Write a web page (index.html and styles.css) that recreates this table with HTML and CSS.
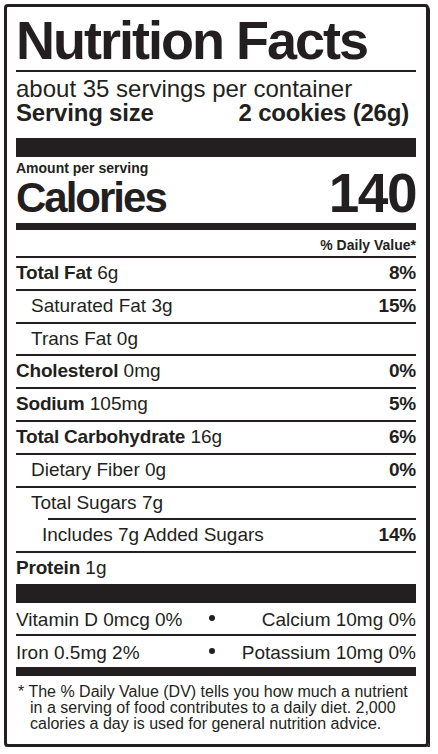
FILE: index.html
```html
<!DOCTYPE html>
<html lang="en">
<head>
    <meta charset="UTF-8">
    <meta name="viewport" content="width=device-width, initial-scale=1.0">
    <title>Nutrition Facts</title>
    <link rel="stylesheet" href="styles.css">
</head>
<body>

<div class="label">
    <h1 class="title">Nutrition Facts</h1>

    <!-- Servings -->
    <div class="serving">
        <div>about 35 servings per container</div>
        <div class="serving-size">
            <span>Serving size</span>
            <span>2 cookies (26g)</span>
        </div>
    </div>

    <!-- Calories -->
    <div class="amount">Amount per serving</div>
    <div class="calories">
        <span class="calories-label">Calories</span>
        <span class="calories-value">140</span>
    </div>

    <div class="dv">% Daily Value*</div>

    <!-- Nutrients -->
    <div class="row"><span><b>Total Fat</b> 6g</span><span class="pct">8%</span></div>
    <div class="row indent"><span>Saturated Fat 3g</span><span class="pct">15%</span></div>
    <div class="row indent"><span>Trans Fat 0g</span></div>
    <div class="row"><span><b>Cholesterol</b> 0mg</span><span class="pct">0%</span></div>
    <div class="row"><span><b>Sodium</b> 105mg</span><span class="pct">5%</span></div>
    <div class="row"><span><b>Total Carbohydrate</b> 16g</span><span class="pct">6%</span></div>
    <div class="row indent"><span>Dietary Fiber 0g</span><span class="pct">0%</span></div>
    <div class="row indent sugars"><span>Total Sugars 7g</span></div>
    <div class="row indent-2"><span>Includes 7g Added Sugars</span><span class="pct">14%</span></div>
    <div class="row protein"><span><b>Protein</b> 1g</span></div>

    <!-- Vitamins and minerals -->
    <div class="row vit">
        <span>Vitamin D 0mcg 0%</span>
        <span class="dot"></span>
        <span class="vit-right">Calcium 10mg 0%</span>
    </div>
    <div class="row vit vit-last">
        <span>Iron 0.5mg 2%</span>
        <span class="dot"></span>
        <span class="vit-right">Potassium 10mg 0%</span>
    </div>

    <p class="note">* The % Daily Value (DV) tells you how much a nutrient in a serving of food contributes to a daily diet. 2,000 calories a day is used for general nutrition advice.</p>
</div>

</body>
</html>
```

FILE: styles.css
```css
* {
    margin: 0;
    padding: 0;
    box-sizing: content-box;
}

body {
    font-family: "Liberation Sans", Arial, sans-serif;
    background-color: #fff;
    color: #231f20;
}

.label {
    width: 400px;
    margin: 4px 0 0 4px;
    padding: 6px 10px 12px 9px;
    border: 3px solid #231f20;
    border-radius: 4px;
    box-shadow: 1px 2px 0 #231f20;
}

.title {
    font-size: 54px;
    line-height: 54px;
    font-weight: bold;
    letter-spacing: -2px;
    white-space: nowrap;
    padding-bottom: 3px;
    border-bottom: 2px solid #231f20;
}

.serving {
    font-size: 24px;
    line-height: 24px;
    padding: 5px 0 13px;
    border-bottom: 19px solid #231f20;
}

.serving-size {
    display: flex;
    justify-content: space-between;
    font-weight: bold;
    letter-spacing: -0.2px;
    padding-right: 7px;
}

.amount {
    font-size: 14px;
    line-height: 14px;
    font-weight: bold;
    padding-top: 4px;
}

.calories {
    display: flex;
    justify-content: space-between;
    align-items: baseline;
    height: 48px;
    font-weight: bold;
    border-bottom: 7px solid #231f20;
}

.calories-label {
    font-size: 42px;
    line-height: 36px;
    letter-spacing: -2px;
}

.calories-value {
    font-size: 55px;
    line-height: 36px;
    letter-spacing: -1.5px;
}

.dv {
    text-align: right;
    font-size: 14px;
    line-height: 14px;
    font-weight: bold;
    padding: 8px 0 4px;
    border-bottom: 2px solid #231f20;
}

.row {
    display: flex;
    justify-content: space-between;
    font-size: 19px;
    line-height: 30.8px;
    border-bottom: 2px solid #231f20;
}

.row b,
.pct {
    font-weight: bold;
    letter-spacing: -0.2px;
}

.indent {
    padding-left: 15px;
}

.indent-2 {
    padding-left: 26px;
}

.sugars {
    border-bottom: none;
    padding-bottom: 2px;
    background: linear-gradient(#231f20, #231f20) right bottom / calc(100% - 32px) 2px no-repeat;
}

.protein {
    border-bottom-width: 19px;
}

.vit {
    display: grid;
    grid-template-columns: 192px 8px 1fr;
    line-height: 29px;
    padding-top: 2px;
}

.vit-last {
    border-bottom-width: 9px;
}

.vit-right {
    text-align: right;
}

.dot {
    width: 6px;
    height: 6px;
    border-radius: 50%;
    background-color: #231f20;
    justify-self: center;
    align-self: center;
    margin-bottom: 3px;
}

.note {
    font-size: 16px;
    line-height: 16px;
    padding: 8px 0 0 14px;
    text-indent: -12px;
}
```
